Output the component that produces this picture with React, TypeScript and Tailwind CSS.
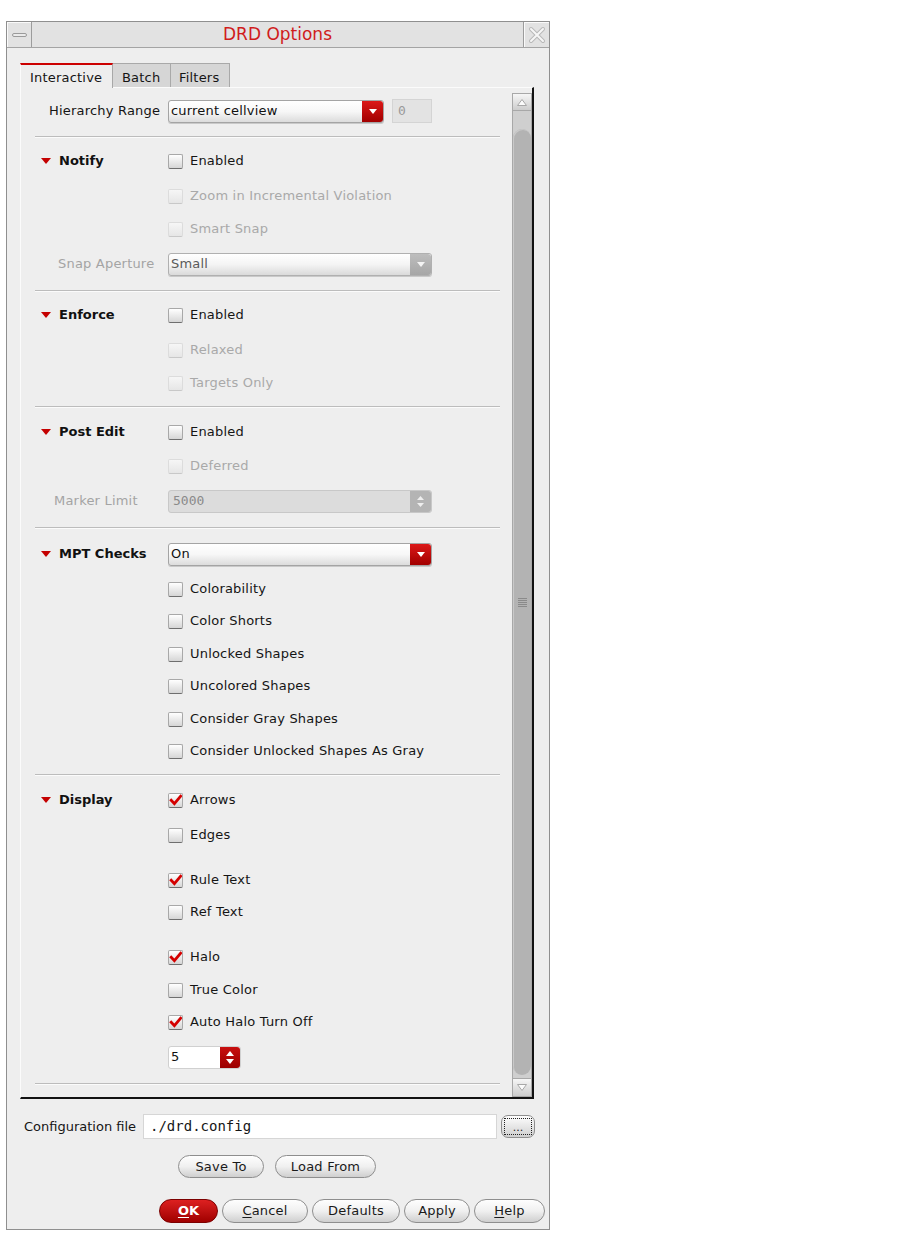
import React from "react";

function Tri() {
  return (
    <svg width="10" height="6" viewBox="0 0 10 6" className="block">
      <path d="M0 0H10L5 6Z" fill="#c40000" />
    </svg>
  );
}

function Box({ checked = false, disabled = false }: { checked?: boolean; disabled?: boolean }) {
  return (
    <span
      className={
        disabled
          ? "relative block w-[15px] h-[15px] rounded-[2px] border border-[#dcdcdc] border-b-[#c8c8c8] bg-gradient-to-b from-[#f6f6f6] to-[#e6e6e6]"
          : "relative block w-[15px] h-[15px] rounded-[2px] border border-[#a8a8a8] border-b-[#6e6e6e] bg-gradient-to-b from-[#ffffff] to-[#d6d6d6]"
      }
    >
      {checked && (
        <svg className="absolute left-[0px] top-[0px]" width="13" height="13" viewBox="0 0 13 13">
          <path d="M2.2 6.2 L5.4 9.6 L11.6 2.2" stroke="#d40000" strokeWidth="2.8" fill="none" strokeLinecap="square" />
        </svg>
      )}
    </span>
  );
}

type RowProps = {
  mt: string;
  label: string;
  checked?: boolean;
  disabled?: boolean;
  head?: string;
};

function CRow({ mt, label, checked, disabled, head }: RowProps) {
  return (
    <div className={`flex items-center h-[24px] ${mt}`}>
      <div className="w-[147px] flex items-center pl-[20px]">
        {head && (
          <>
            <Tri />
            <span className="ml-[8px] text-[13px] font-bold text-[#111]">{head}</span>
          </>
        )}
      </div>
      <Box checked={checked} disabled={disabled} />
      <span
        className={
          disabled
            ? "ml-[7px] text-[13px] tracking-[0.2px] text-[#a9a9a9]"
            : "ml-[7px] text-[13px] tracking-[0.2px] text-[#151515]"
        }
      >
        {label}
      </span>
    </div>
  );
}

function Sep({ mt }: { mt: string }) {
  return <div className={`ml-[14px] w-[465px] h-[2px] border-t border-t-[#bcbcbc] border-b border-b-[#fbfbfb] ${mt}`} />;
}

function RedBtn() {
  return (
    <span className="ml-auto h-full w-[21px] rounded-r-[3px] bg-gradient-to-b from-[#dc1818] to-[#a20000] flex items-center justify-center">
      <svg width="8" height="5" viewBox="0 0 8 5">
        <path d="M0 0H8L4 5Z" fill="#ffffff" />
      </svg>
    </span>
  );
}

function GrayBtn() {
  return (
    <span className="ml-auto h-full w-[21px] rounded-r-[3px] bg-gradient-to-b from-[#bdbdbd] to-[#a6a6a6] flex items-center justify-center">
      <svg width="8" height="5" viewBox="0 0 8 5">
        <path d="M0 0H8L4 5Z" fill="#f4f4f4" />
      </svg>
    </span>
  );
}

function Pill({ w, children, red = false }: { w: string; children: React.ReactNode; red?: boolean }) {
  return (
    <div
      className={
        red
          ? `${w} h-full rounded-full border border-[#7c0000] bg-gradient-to-b from-[#dd2020] to-[#a00000] flex items-center justify-center text-[13px] font-bold text-white`
          : `${w} h-full rounded-full border border-[#8e8e8e] bg-gradient-to-b from-[#fefefe] via-[#f0f0f0] to-[#cfcfcf] flex items-center justify-center text-[13px] tracking-[0.2px] text-[#1a1a1a]`
      }
    >
      {children}
    </div>
  );
}

export default function App() {
  return (
    <div className="w-[924px] h-[1235px] bg-white pt-[21px] pl-[6px] font-['DejaVu_Sans',sans-serif]">
      <div className="w-[544px] h-[1209px] border border-[#8f8f8f] bg-[#eeeeee]">
        {/* Title bar */}
        <div className="flex h-[26px] border-b border-[#a4a4a4] bg-[#e2e2e2]">
          <div className="w-[25px] h-full border-r border-[#9c9c9c] shadow-[inset_1px_1px_0_#fafafa] flex items-center justify-center">
            <span className="block w-[15px] h-[4px] rounded-[2px] border border-[#9a9a9a] bg-[#eaeaea]" />
          </div>
          <div className="flex-1 flex items-center justify-center text-[17px] text-[#d01c1c]">DRD Options</div>
          <div className="w-[26px] h-full border-l border-[#9c9c9c] shadow-[inset_1px_1px_0_#fafafa] flex items-center justify-center">
            <svg width="18" height="18" viewBox="0 0 18 18">
              <path d="M3 3L15 15M15 3L3 15" stroke="#b8b8b8" strokeWidth="4" strokeLinecap="round" />
              <path d="M3 3L15 15M15 3L3 15" stroke="#f6f6f6" strokeWidth="2" strokeLinecap="round" />
            </svg>
          </div>
        </div>

        <div className="pl-[13px] pt-[15px]">
          {/* Tabs */}
          <div className="flex items-end h-[24px] relative z-10">
            <div className="w-[93px] h-[25px] mb-[-1px] border-t-2 border-t-[#cc0000] border-l border-l-[#fbfbfb] border-r border-r-[#a8a8a8] bg-[#eeeeee] pl-[9px] pt-[3px] text-[13px] tracking-[0.2px] text-[#151515]">
              Interactive
            </div>
            <div className="w-[58px] h-[24px] border-t border-r border-[#a9a9a9] bg-[#d6d6d6] pl-[9px] pt-[4px] text-[13px] tracking-[0.2px] text-[#151515]">
              Batch
            </div>
            <div className="w-[59px] h-[24px] border-t border-r border-[#a9a9a9] bg-[#d6d6d6] pl-[8px] pt-[4px] text-[13px] tracking-[0.2px] text-[#151515]">
              Filters
            </div>
          </div>

          {/* Panel */}
          <div className="flex h-[1012px] w-[514px] border-t border-l border-[#fbfbfb] border-r-2 border-b-2 border-r-[#121212] border-b-[#121212]">
            <div className="w-[491px] flex flex-col">
              {/* Hierarchy row */}
              <div className="flex items-center h-[24px] mt-[11px]">
                <div className="w-[147px] pl-[28px] text-[13px] tracking-[0.2px] text-[#151515]">Hierarchy Range</div>
                <div className="flex items-center h-[23px] w-[216px] rounded-[3px] border border-[#a4a4a4] bg-gradient-to-b from-white via-[#f7f7f7] to-[#dcdcdc] shadow-[0_1px_0_#c9c9c9]">
                  <span className="pl-[2px] text-[13px] tracking-[0.2px] text-[#111]">current cellview</span>
                  <RedBtn />
                </div>
                <div className="ml-[8px] w-[40px] h-[24px] border border-[#d4d4d4] bg-[#e3e3e3] flex items-center pl-[5px] font-['DejaVu_Sans_Mono',monospace] text-[13px] text-[#9a9a9a]">
                  0
                </div>
              </div>
              <Sep mt="mt-[13px]" />

              <CRow mt="mt-[11px]" head="Notify" label="Enabled" />
              <CRow mt="mt-[11px]" label="Zoom in Incremental Violation" disabled />
              <CRow mt="mt-[9px]" label="Smart Snap" disabled />
              <div className="flex items-center h-[24px] mt-[11px]">
                <div className="w-[147px] pl-[37px] text-[13px] tracking-[0.2px] text-[#a4a4a4]">Snap Aperture</div>
                <div className="flex items-center h-[23px] w-[264px] rounded-[3px] border border-[#b0b0b0] bg-gradient-to-b from-white via-[#f4f4f4] to-[#dadada] shadow-[0_1px_0_#c9c9c9]">
                  <span className="pl-[2px] text-[13px] tracking-[0.2px] text-[#5a5a5a]">Small</span>
                  <GrayBtn />
                </div>
              </div>
              <Sep mt="mt-[14px]" />

              <CRow mt="mt-[11px]" head="Enforce" label="Enabled" />
              <CRow mt="mt-[11px]" label="Relaxed" disabled />
              <CRow mt="mt-[9px]" label="Targets Only" disabled />
              <Sep mt="mt-[11px]" />

              <CRow mt="mt-[12px]" head="Post Edit" label="Enabled" />
              <CRow mt="mt-[10px]" label="Deferred" disabled />
              <div className="flex items-center h-[24px] mt-[11px]">
                <div className="w-[147px] pl-[33px] text-[13px] tracking-[0.2px] text-[#a4a4a4]">Marker Limit</div>
                <div className="flex items-center h-[23px] w-[264px] rounded-[3px] border border-[#c8c8c8] bg-[#dcdcdc]">
                  <span className="pl-[4px] font-['DejaVu_Sans_Mono',monospace] text-[13px] text-[#8a8a8a]">5000</span>
                  <span className="ml-auto h-full w-[21px] rounded-r-[3px] bg-[#b4b4b4] flex flex-col items-center justify-center gap-[3px]">
                    <svg width="7" height="4" viewBox="0 0 7 4"><path d="M0 4H7L3.5 0Z" fill="#eeeeee" /></svg>
                    <svg width="7" height="4" viewBox="0 0 7 4"><path d="M0 0H7L3.5 4Z" fill="#eeeeee" /></svg>
                  </span>
                </div>
              </div>
              <Sep mt="mt-[14px]" />

              <div className="flex items-center h-[24px] mt-[13px]">
                <div className="w-[147px] flex items-center pl-[20px]">
                  <Tri />
                  <span className="ml-[8px] text-[13px] font-bold text-[#111]">MPT Checks</span>
                </div>
                <div className="flex items-center h-[23px] w-[264px] rounded-[3px] border border-[#a4a4a4] bg-gradient-to-b from-white via-[#f7f7f7] to-[#dcdcdc] shadow-[0_1px_0_#c9c9c9]">
                  <span className="pl-[2px] text-[13px] tracking-[0.2px] text-[#111]">On</span>
                  <RedBtn />
                </div>
              </div>
              <CRow mt="mt-[11px]" label="Colorability" />
              <CRow mt="mt-[8px]" label="Color Shorts" />
              <CRow mt="mt-[9px]" label="Unlocked Shapes" />
              <CRow mt="mt-[8px]" label="Uncolored Shapes" />
              <CRow mt="mt-[9px]" label="Consider Gray Shapes" />
              <CRow mt="mt-[8px]" label="Consider Unlocked Shapes As Gray" />
              <Sep mt="mt-[11px]" />

              <CRow mt="mt-[12px]" head="Display" label="Arrows" checked />
              <CRow mt="mt-[11px]" label="Edges" />
              <CRow mt="mt-[21px]" label="Rule Text" checked />
              <CRow mt="mt-[8px]" label="Ref Text" />
              <CRow mt="mt-[21px]" label="Halo" checked />
              <CRow mt="mt-[9px]" label="True Color" />
              <CRow mt="mt-[8px]" label="Auto Halo Turn Off" checked />
              <div className="flex items-center h-[24px] mt-[11px]">
                <div className="w-[147px]" />
                <div className="flex items-center h-[23px] w-[73px] rounded-[3px] border border-[#d0d0d0] bg-white">
                  <span className="pl-[2px] text-[13px] text-[#111]">5</span>
                  <span className="ml-auto h-full w-[20px] rounded-r-[3px] bg-gradient-to-b from-[#c81010] to-[#9c0000] flex flex-col items-center justify-center gap-[3px]">
                    <svg width="8" height="5" viewBox="0 0 8 5"><path d="M0 5H8L4 0Z" fill="#ffffff" /></svg>
                    <svg width="8" height="5" viewBox="0 0 8 5"><path d="M0 0H8L4 5Z" fill="#ffffff" /></svg>
                  </span>
                </div>
              </div>
              <Sep mt="mt-[14px]" />
            </div>

            {/* Scrollbar */}
            <div className="w-[20px] pt-[5px] flex flex-col">
              <div className="h-[18px] border border-[#a8a8a8] bg-gradient-to-b from-[#f6f6f6] to-[#cdcdcd] flex items-center justify-center">
                <svg width="10" height="7" viewBox="0 0 10 7"><path d="M0.5 6.5H9.5L5 0.5Z" fill="#fbfbfb" stroke="#a8a8a8" /></svg>
              </div>
              <div className="flex-1 bg-[#cfcfcf] border-x border-[#a8a8a8] flex flex-col">
                <div className="mt-[18px] mb-[3px] flex-1 rounded-[9px] bg-[#b3b3b3] shadow-[inset_1px_1px_0_#c9c9c9] flex items-center justify-center">
                  <div className="flex flex-col gap-[1px]">
                    <span className="block w-[9px] h-[1px] bg-[#8a8a8a]" />
                    <span className="block w-[9px] h-[1px] bg-[#8a8a8a]" />
                    <span className="block w-[9px] h-[1px] bg-[#8a8a8a]" />
                    <span className="block w-[9px] h-[1px] bg-[#8a8a8a]" />
                    <span className="block w-[9px] h-[1px] bg-[#8a8a8a]" />
                  </div>
                </div>
              </div>
              <div className="h-[19px] border border-[#a8a8a8] bg-gradient-to-b from-[#f6f6f6] to-[#cdcdcd] flex items-center justify-center">
                <svg width="10" height="7" viewBox="0 0 10 7"><path d="M0.5 0.5H9.5L5 6.5Z" fill="#fbfbfb" stroke="#a8a8a8" /></svg>
              </div>
            </div>
          </div>

          {/* Config row */}
          <div className="flex items-center h-[25px] mt-[15px]">
            <div className="w-[123px] pl-[4px] text-[13px] text-[#151515]">Configuration file</div>
            <div className="w-[354px] h-[25px] border border-[#d6d6d6] bg-white flex items-center pl-[6px] font-['DejaVu_Sans_Mono',monospace] text-[14px] text-[#151515]">
              ./drd.config
            </div>
            <div className="ml-[4px] w-[34px] h-[23px] rounded-[7px] border border-[#8e8e8e] bg-gradient-to-b from-[#fefefe] to-[#cfcfcf] flex items-center justify-center">
              <div className="w-[28px] h-[17px] border border-dotted border-[#222] flex items-end justify-center text-[11px] leading-[12px] text-[#222]">...</div>
            </div>
          </div>

          {/* Save/Load */}
          <div className="flex h-[23px] mt-[16px] pl-[158px] gap-[11px]">
            <Pill w="w-[86px]">Save To</Pill>
            <Pill w="w-[101px]">Load From</Pill>
          </div>

          {/* Bottom buttons */}
          <div className="flex h-[24px] mt-[21px] pl-[139px] gap-[4px]">
            <Pill w="w-[59px]" red>
              <span className="underline underline-offset-2">O</span>K
            </Pill>
            <Pill w="w-[86px]">
              <span className="underline underline-offset-2">C</span>ancel
            </Pill>
            <Pill w="w-[88px]">Defaults</Pill>
            <Pill w="w-[66px]">Apply</Pill>
            <Pill w="w-[71px]">
              <span className="underline underline-offset-2">H</span>elp
            </Pill>
          </div>
        </div>
      </div>
    </div>
  );
}
